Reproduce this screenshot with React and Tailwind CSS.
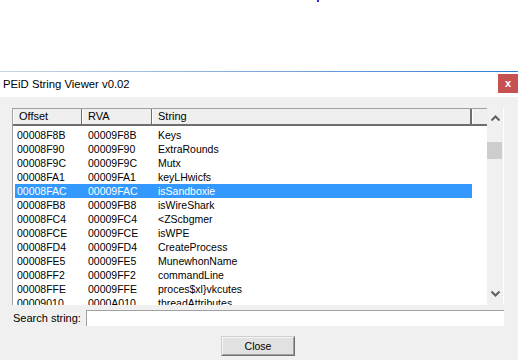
import React from "react";

const rows = [
  ["00008F8B", "00009F8B", "Keys"],
  ["00008F90", "00009F90", "ExtraRounds"],
  ["00008F9C", "00009F9C", "Mutx"],
  ["00008FA1", "00009FA1", "keyLHwicfs"],
  ["00008FAC", "00009FAC", "isSandboxie"],
  ["00008FB8", "00009FB8", "isWireShark"],
  ["00008FC4", "00009FC4", "<ZScbgmer"],
  ["00008FCE", "00009FCE", "isWPE"],
  ["00008FD4", "00009FD4", "CreateProcess"],
  ["00008FE5", "00009FE5", "MunewhonName"],
  ["00008FF2", "00009FF2", "commandLine"],
  ["00008FFE", "00009FFE", "proces$xl}vkcutes"],
  ["00009010", "0000A010", "threadAttributes"],
];

const SELECTED = 4;

function Chevron({ down }) {
  return (
    <svg width="9" height="6" viewBox="0 0 9 6" className={down ? "rotate-180" : ""}>
      <path d="M0.5 5.5 L4.5 1.5 L8.5 5.5" fill="none" stroke="#606060" strokeWidth="2" />
    </svg>
  );
}

export default function App() {
  return (
    <div
      className="w-[518px] h-[360px] bg-white flex flex-col overflow-hidden"
      style={{ fontFamily: '"Liberation Sans", Arial, sans-serif' }}
    >
      {/* desktop strip */}
      <div className="h-[71px] shrink-0">
        <div className="ml-[317px] w-[2px] h-[2px] bg-[#2a2ae0]"></div>
      </div>

      {/* window border */}
      <div className="h-px shrink-0 bg-linear-to-r from-[#c9d5e3] to-[#2b7bd2]"></div>

      {/* title bar */}
      <div className="h-[25px] shrink-0 bg-white flex items-start justify-between">
        <span className="pl-[3px] pt-[6px] text-[11.3px] leading-[13px] text-black">
          PEiD String Viewer v0.02
        </span>
        <div className="mt-[2px] w-[20px] h-[19px] bg-[#c75050] flex items-center justify-center">
          <span className="text-white text-[11px] font-bold leading-none -mt-[1px]">x</span>
        </div>
      </div>

      {/* client */}
      <div className="flex-1 bg-[#f0f0f0] flex flex-col pt-[11px]">
        {/* list box */}
        <div className="ml-[12px] w-[492px] h-[197px] flex">
          <div className="w-[475px] h-full border-l border-[#a0a0a0] bg-white flex flex-col">
            {/* header */}
            <div className="h-[18px] shrink-0 flex bg-[#efefef] border-t border-[#a0a0a0] border-b-2 border-b-[#6e6e6e] text-[11px] leading-[15px] text-black">
              <div className="w-[69px] pl-[5px] border-l border-white border-r border-r-[#6e6e6e]">Offset</div>
              <div className="w-[70px] pl-[5px] border-l border-white border-r border-r-[#6e6e6e]">RVA</div>
              <div className="w-[320px] pl-[5px] border-l border-white border-r-2 border-r-[#6e6e6e]">String</div>
              <div className="flex-1 border-l border-white"></div>
            </div>
            {/* rows */}
            <div className="flex-1 overflow-hidden pt-[2px] pl-[2px]">
              {rows.map((r, i) => (
                <div
                  key={i}
                  className={`w-[457px] h-[14px] flex text-[10.5px] leading-[14px] ${
                    i === SELECTED ? "bg-[#3399ff] text-white" : "text-black"
                  }`}
                >
                  <div className="w-[67px] pl-[2px]">{r[0]}</div>
                  <div className="w-[70px] pl-[6px]">{r[1]}</div>
                  <div className="flex-1 pl-[6px]">{r[2]}</div>
                </div>
              ))}
            </div>
          </div>

          {/* scrollbar */}
          <div className="w-[16px] h-full bg-[#f0f0f0] flex flex-col items-center">
            <div className="h-[18px] pt-[7px] flex justify-center">
              <Chevron />
            </div>
            <div className="mt-[16px] w-[15px] h-[17px] bg-[#cdcdcd] self-start"></div>
            <div className="flex-1"></div>
            <div className="h-[18px] pt-[4px] flex justify-center">
              <Chevron down />
            </div>
          </div>
          <div className="w-px h-full bg-white"></div>
        </div>

        {/* search */}
        <div className="mt-[5px] h-[16px] flex items-center">
          <span className="pl-[13px] w-[86px] text-[11px] leading-[16px] text-black">Search string:</span>
          <div className="w-[418px] h-[16px] bg-white border-t border-l border-[#a0a0a0]"></div>
        </div>

        {/* close button */}
        <div className="mt-[10px] ml-[221px] w-[74px] h-[20px] bg-[#e1e1e1] border border-t-[#d0d0d0] border-l-[#d0d0d0] border-b-[#6f6f6f] border-r-[#6f6f6f] flex">
          <div className="flex-1 border border-t-[#f5f5f5] border-l-[#f5f5f5] border-b-[#a0a0a0] border-r-[#a0a0a0] flex items-center justify-center text-[10.5px] leading-none text-black">
            Close
          </div>
        </div>
      </div>
    </div>
  );
}
